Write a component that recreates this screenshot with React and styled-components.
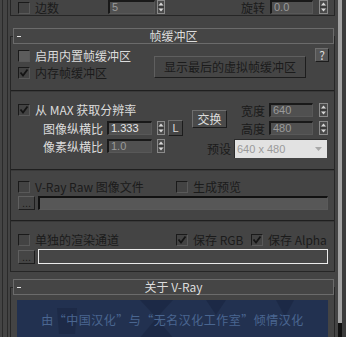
import React from 'react';
import styled, { createGlobalStyle } from 'styled-components';

const LIGHT = '#dcdcdc';
const DIM = '#1b1b1b';
const FRAME = '#262626';

const GlobalStyle = createGlobalStyle`
  * { box-sizing: border-box; }
  html, body { margin: 0; padding: 0; background: #444444; }
  body {
    overflow: hidden;
    font-family: "Noto Sans CJK SC", "Liberation Sans", sans-serif;
    font-size: 12px;
  }
`;

const Window = styled.div`
  display: flex;
  width: 346px;
  height: 337px;
  overflow: hidden;
  background: #444444;
`;

const Panel = styled.div`
  flex: none;
  width: 336px;
  margin-left: 2px;
  border-left: 1px solid #2a2a2a;
  padding-left: 4px;
  display: flex;
`;

const Inner = styled.div`
  flex: 1;
  border-left: 1px solid #2a2a2a;
  padding-left: 2px;
  display: flex;
  flex-direction: column;
`;

const Scrollbar = styled.div`
  flex: none;
  width: 8px;
  display: flex;
`;

const ScrollTrack = styled.div`
  width: 4px;
  display: flex;
  flex-direction: column;
  background: #a2a2a2;
`;

const ScrollEnd = styled.div`
  margin-top: auto;
  height: 14px;
  background: #111111;
`;

const ScrollEdge = styled.div`
  width: 4px;
  background: #3b3b3b;
`;

const Rollout = styled.section`
  flex: none;
  width: 325px;
  display: flex;
  flex-direction: column;
  margin-top: ${p => p.$mt || 0}px;
`;

const TopBody = styled.div`
  height: 16px;
  border: 1px solid ${FRAME};
  border-top: none;
  display: flex;
  align-items: flex-end;
  padding: 0 0 1px 7px;
  overflow: hidden;
`;

const Header = styled.div`
  position: relative;
  z-index: 1;
  height: 16px;
  margin: 0 1px 0 3px;
  border: 1px solid #6b6b6b;
  background: #454545;
  display: grid;
  grid-template-columns: 1fr auto 1fr;
  align-items: center;
  padding: 0 3px;
  color: ${LIGHT};
  line-height: 14px;
  white-space: nowrap;
`;

const Minus = styled.span`
  justify-self: start;
  width: 4px;
  height: 1px;
  background: #e6e6e6;
`;

const Body = styled.div`
  margin-top: -8px;
  border: 1px solid ${FRAME};
  padding-top: ${p => p.$pt}px;
  display: flex;
  flex-direction: column;
`;

const Group = styled.div`
  height: ${p => p.$h}px;
  display: flex;
  flex-direction: ${p => (p.$stack ? 'column' : 'row')};
  align-items: flex-start;
  padding: ${p => p.$pt || 0}px 0 0 7px;
`;

const Divider = styled.div`
  height: 2px;
  border-top: 1px solid #1f1f1f;
  background: #393939;
`;

const Col = styled.div`
  flex: none;
  width: ${p => p.$w}px;
  display: flex;
  flex-direction: column;
  gap: ${p => p.$gap || 0}px;
  padding-top: ${p => p.$pt || 0}px;
`;

const Row = styled.div`
  display: flex;
  align-items: center;
  height: ${p => p.$h || 14}px;
  margin-top: ${p => p.$mt || 0}px;
  white-space: nowrap;
`;

const CheckWrap = styled.div`
  flex: none;
  display: flex;
  align-items: center;
  height: 13px;
  width: ${p => (p.$w ? `${p.$w}px` : 'auto')};
`;

const Box = styled.span`
  flex: none;
  width: 12px;
  height: 12px;
  border: 1px solid;
  border-color: #1a1a1a #595959 #595959 #1a1a1a;
  background: ${p => (p.$lit ? '#5c5c5c' : '#434343')};
  display: flex;
  align-items: center;
  justify-content: center;
`;

const CheckLabel = styled.span`
  margin-left: 5px;
  line-height: 13px;
  color: ${p => (p.$dim ? DIM : LIGHT)};
  white-space: nowrap;
`;

const RowLabel = styled.span`
  flex: none;
  width: ${p => p.$w}px;
  text-align: right;
  line-height: 13px;
  color: ${p => (p.$dim ? DIM : LIGHT)};
`;

const Field = styled.div`
  flex: none;
  width: ${p => p.$w}px;
  height: 14px;
  margin-left: ${p => p.$ml || 0}px;
  background: #505050;
  border-top: 2px solid #191919;
  border-left: 2px solid #191919;
  border-right: 1px solid #585858;
  border-bottom: 1px solid #585858;
  padding-left: 2px;
  font: 11px "Liberation Sans", Arial, sans-serif;
  line-height: 11px;
  color: ${p => (p.$bright ? '#e4e4e4' : '#9a9a9a')};
`;

const ArrowBox = styled.span`
  flex: none;
  display: block;
  width: ${p => p.$w}px;
  height: 14px;
  margin-left: ${p => p.$ml || 0}px;
  svg { display: block; }
`;

const Button = styled.div`
  flex: none;
  width: ${p => p.$w}px;
  height: ${p => p.$h}px;
  margin-top: ${p => p.$mt || 0}px;
  margin-left: ${p => p.$ml || 0}px;
  border: 1px solid;
  border-color: ${p => (p.$raised ? '#6e6e6e #1c1c1c #1c1c1c #6e6e6e' : '#5f5f5f #1d1d1d #1d1d1d #5f5f5f')};
  background: ${p => p.$bg || '#454545'};
  color: ${p => (p.$dim ? DIM : LIGHT)};
  display: flex;
  align-items: center;
  justify-content: center;
  line-height: 14px;
  white-space: nowrap;
  font-family: ${p => (p.$latin ? '"Liberation Sans", Arial, sans-serif' : 'inherit')};
  font-size: ${p => (p.$latin ? '11px' : '12px')};
`;

const RightArea = styled.div`
  flex: 1;
  margin-left: 9px;
  padding: 11px 6px 0 0;
  display: flex;
  flex-direction: column;
`;

const TopPart = styled.div`
  display: flex;
  align-items: center;
`;

const WHBlock = styled.div`
  margin-left: auto;
  display: flex;
  flex-direction: column;
  gap: 4px;
`;

const PresetRow = styled.div`
  display: flex;
  align-items: center;
  justify-content: flex-end;
  margin-top: 4px;
  padding-right: 1px;
`;

const Dropdown = styled.div`
  width: 93px;
  height: 19px;
  margin-left: 3px;
  background: #e2e2e2;
  border-top: 1px solid #2a2a2a;
  border-left: 1px solid #2a2a2a;
  display: flex;
  align-items: center;
  padding-left: 2px;
  font: 11px "Liberation Sans", Arial, sans-serif;
  color: #9a9a9a;
  svg { margin-left: auto; margin-right: 5px; }
`;

const PathField = styled.div`
  flex: none;
  width: 290px;
  height: ${p => p.$h || 14}px;
  margin-left: 3px;
  background: ${p => (p.$focus ? '#464646' : '#575757')};
  border: 1px solid;
  border-color: ${p => (p.$focus ? '#ececec' : '#111111 #5a5a5a #5a5a5a #111111')};
  border-width: ${p => (p.$focus ? '1px' : '2px 1px 1px 2px')};
`;

const AboutImage = styled.div`
  position: relative;
  width: 311px;
  height: 60px;
  margin-left: 6px;
  background: #223150;
  overflow: hidden;
  display: flex;
  justify-content: center;
  padding-top: 12px;
  svg { position: absolute; left: 0; top: 0; }
`;

const AboutText = styled.span`
  position: relative;
  color: #4a6690;
  line-height: 16px;
  letter-spacing: 0.5px;
  white-space: nowrap;
`;

const Arrows = ({ w = 8, ml = 0 }) => {
  const c = w / 2;
  return (
    <ArrowBox $w={w} $ml={ml}>
      <svg width={w} height={14} viewBox={`0 0 ${w} 14`}>
        <rect x="0.5" y="0.5" width={w - 1} height="13" fill="#4a4a4a" stroke="#8a8a8a" />
        <line x1="1" y1="7" x2={w - 1} y2="7" stroke="#2a2a2a" />
        <path d={`M${c} 2.5 L${c + 2.5} 5.5 L${c - 2.5} 5.5Z`} fill="#d8d8d8" />
        <path d={`M${c} 11.5 L${c + 2.5} 8.5 L${c - 2.5} 8.5Z`} fill="#d8d8d8" />
      </svg>
    </ArrowBox>
  );
};

const CheckItem = ({ label, checked, lit, dim, w }) => (
  <CheckWrap $w={w}>
    <Box $lit={lit}>
      {checked && (
        <svg width="10" height="10" viewBox="0 0 10 10">
          <path d="M1.5 4.5 L4 7.5 L8.5 1.5" fill="none" stroke="#141414" strokeWidth="1.8" />
        </svg>
      )}
    </Box>
    {label && <CheckLabel $dim={dim}>{label}</CheckLabel>}
  </CheckWrap>
);

export default function App() {
  return (
    <>
      <GlobalStyle />
      <Window>
        <Panel>
          <Inner>
            <Rollout>
              <TopBody>
                <CheckItem w={90} dim label="边数" />
                <Field $w={47}>5</Field>
                <Arrows w={8} ml={2} />
                <RowLabel $w={100} $dim>旋转</RowLabel>
                <Field $w={43} $ml={5}>0.0</Field>
                <Arrows w={9} ml={6} />
              </TopBody>
            </Rollout>

            <Rollout $mt={12}>
              <Header>
                <Minus />
                <span>帧缓冲区</span>
                <span />
              </Header>
              <Body $pt={7}>
                <Group $h={46}>
                  <Col $w={136} $pt={5} $gap={4}>
                    <CheckItem lit label="启用内置帧缓冲区" />
                    <CheckItem checked dim label="内存帧缓冲区" />
                  </Col>
                  <Button $w={152} $h={22} $mt={12} $dim>显示最后的虚拟帧缓冲区</Button>
                  <Button $w={14} $h={14} $mt={4} $ml={9} $bg="#565656" $raised>?</Button>
                </Group>
                <Divider />
                <Group $h={77}>
                  <Col $w={165} $pt={11}>
                    <CheckItem checked label="从 MAX 获取分辨率" />
                    <Row $h={16} $mt={4}>
                      <RowLabel $w={85}>图像纵横比</RowLabel>
                      <Field $w={45} $ml={4} $bright>1.333</Field>
                      <Arrows w={8} ml={5} />
                      <Button $w={15} $h={16} $ml={3} $raised $latin>L</Button>
                    </Row>
                    <Row $h={16} $mt={2}>
                      <RowLabel $w={85}>像素纵横比</RowLabel>
                      <Field $w={45} $ml={4}>1.0</Field>
                      <Arrows w={8} ml={5} />
                    </Row>
                  </Col>
                  <RightArea>
                    <TopPart>
                      <Button $w={35} $h={18} $raised $bg="#4a4a4a">交换</Button>
                      <WHBlock>
                        <Row>
                          <RowLabel $w={30} $dim>宽度</RowLabel>
                          <Field $w={44} $ml={4}>640</Field>
                          <Arrows w={9} ml={6} />
                        </Row>
                        <Row>
                          <RowLabel $w={30} $dim>高度</RowLabel>
                          <Field $w={44} $ml={4}>480</Field>
                          <Arrows w={9} ml={6} />
                        </Row>
                      </WHBlock>
                    </TopPart>
                    <PresetRow>
                      <RowLabel $w={30} $dim>预设</RowLabel>
                      <Dropdown>
                        640 x 480
                        <svg width="7" height="4" viewBox="0 0 7 4">
                          <path d="M0 0 L7 0 L3.5 4Z" fill="#a8a8a8" />
                        </svg>
                      </Dropdown>
                    </PresetRow>
                  </RightArea>
                </Group>
                <Divider />
                <Group $h={49} $pt={9} $stack>
                  <Row $h={13}>
                    <CheckItem w={158} dim label="V-Ray Raw 图像文件" />
                    <CheckItem dim label="生成预览" />
                  </Row>
                  <Row $mt={3}>
                    <Button $w={17} $h={14} $dim $latin>...</Button>
                    <PathField />
                  </Row>
                </Group>
                <Divider />
                <Group $h={49} $pt={11} $stack>
                  <Row $h={13}>
                    <CheckItem w={158} dim label="单独的渲染通道" />
                    <CheckItem w={75} checked dim label="保存 RGB" />
                    <CheckItem checked dim label="保存 Alpha" />
                  </Row>
                  <Row $mt={3} $h={15}>
                    <Button $w={17} $h={14} $dim $latin>...</Button>
                    <PathField $focus $h={15} />
                  </Row>
                </Group>
              </Body>
            </Rollout>

            <Rollout $mt={7}>
              <Header>
                <Minus />
                <span>关于 V-Ray</span>
                <span />
              </Header>
              <Body $pt={12}>
                <AboutImage>
                  <svg width="311" height="60" viewBox="0 0 311 60">
                    <path d="M40 8 L60 8 L58 34 L42 34Z" fill="#1b2843" opacity="0.7" />
                    <path d="M123 0 L156 0 L139.5 18Z" fill="#1b2843" opacity="0.8" />
                    <path d="M139.5 18 L158 40 L121 40Z" fill="#1b2843" opacity="0.8" />
                    <path d="M189 0 L209 0 L199 15Z" fill="#1b2843" opacity="0.8" />
                    <path d="M259 0 L277 0 L268 17Z" fill="#1b2843" opacity="0.8" />
                  </svg>
                  <AboutText>由“中国汉化”与“无名汉化工作室”倾情汉化</AboutText>
                </AboutImage>
              </Body>
            </Rollout>
          </Inner>
        </Panel>
        <Scrollbar>
          <ScrollTrack>
            <ScrollEnd />
          </ScrollTrack>
          <ScrollEdge />
        </Scrollbar>
      </Window>
    </>
  );
}
